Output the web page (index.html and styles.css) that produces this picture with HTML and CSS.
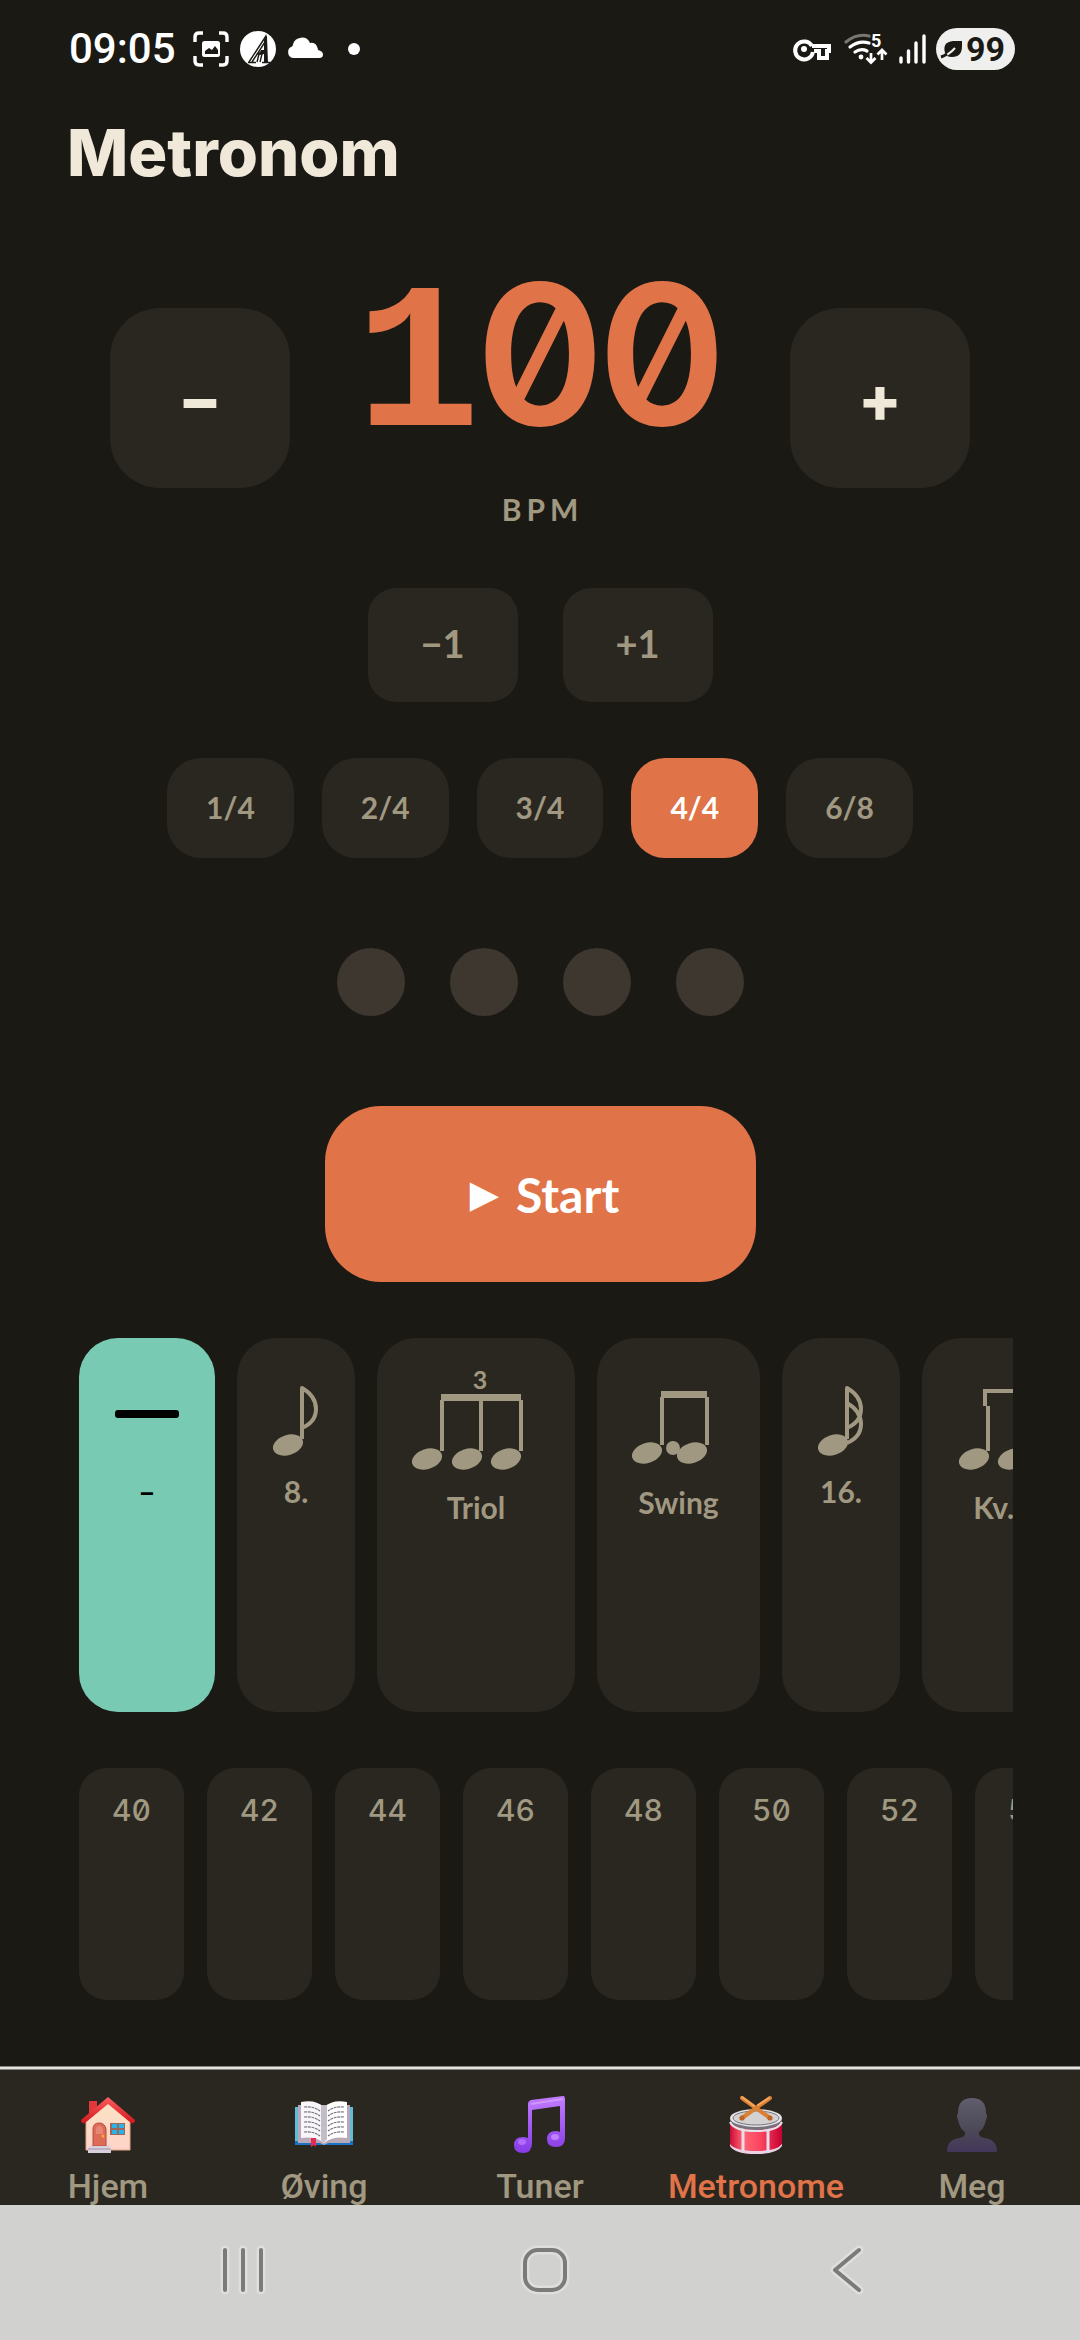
FILE: index.html
```html
<!DOCTYPE html>
<html lang="no">
<head>
<meta charset="utf-8">
<meta name="viewport" content="width=device-width, initial-scale=1">
<title>Metronom</title>
<link rel="stylesheet" href="styles.css">
</head>
<body>
<div class="app">
  <header class="status">
    <div class="status-side">
      <span class="clock">09:05</span>
      <svg width="36" height="36" viewBox="0 0 36 36" aria-hidden="true">
        <path d="M2 11V6q0-4 4-4h4M26 2h4q4 0 4 4v5M34 25v5q0 4-4 4h-4M10 34H6q-4 0-4-4v-5" fill="none" stroke="#fff" stroke-width="3.4"/>
        <rect x="9" y="10" width="18" height="16" rx="2.500" fill="#fff"/>
        <path d="M12 23v-3l4-3 3 2 3-4 3 4v4z" fill="#1a1914"/>
      </svg>
      <svg width="36" height="36" viewBox="0 0 36 36" aria-hidden="true">
        <circle cx="18" cy="18" r="18" fill="#fff"/>
        <path d="M9 31L26 5M12 31L25 11M8 31.500h8M17 31l2-8M20 31l2-8M22 31.500h8" fill="none" stroke="#1a1914" stroke-width="1.400"/>
        <path d="M24 9l2-6 1 3 1 26h-4z" fill="#1a1914"/>
        <path d="M16 23l4-2 1-2h3v4l-4 1z" fill="#1a1914"/>
      </svg>
      <svg width="36" height="36" viewBox="0 0 36 36" aria-hidden="true">
        <path d="M6 27a6 6 0 0 1-1-11.500q1-1 1-2a9 9 0 0 1 17-1.500q5-1 7 3.500 1 2 1 3.500 5 1 5 4.500t-4 3.500z" fill="#fff"/>
      </svg>
      <span class="dot-more"></span>
    </div>
    <div class="status-side status-right">
      <svg width="41" height="24" viewBox="0 0 41 24" aria-hidden="true">
        <path d="M19 9h17v5h-2v7h-8v-7h-5M19 9A9 9 0 1 0 20 15" fill="none" stroke="#fff" stroke-width="4"/>
        <circle cx="11" cy="12" r="3" fill="#fff"/>
      </svg>
      <svg width="44" height="34" viewBox="0 0 44 34" aria-hidden="true">
        <path d="M2 10Q13 1 25 4" fill="none" stroke="#77766f" stroke-width="3.200" stroke-linecap="round"/>
        <path d="M6 15q9-7 19-4M11 20q6-4 12-1" fill="none" stroke="#fff" stroke-width="3.200" stroke-linecap="round"/>
        <circle cx="17" cy="25" r="2.400" fill="#fff"/>
        <path d="M27 21v9M22.500 26l4.500 4.500 4.500-4.500M38 28v-9M33.500 22.500l4.500-4.500 4.500 4.500" fill="none" stroke="#fff" stroke-width="2.700"/>
        <text x="27" y="15" class="wifi-band">5</text>
      </svg>
      <svg width="28" height="32" viewBox="0 0 28 32" aria-hidden="true">
        <path d="M3 25v4M10.500 18v11M18 10v19M26 3v26" stroke="#fff" stroke-width="3.400" stroke-linecap="round"/>
      </svg>
      <span class="battery">
        <svg width="24" height="20" viewBox="0 0 24 20" aria-hidden="true">
          <path d="M5 14Q2 3 13 2h9v5q0 11-10 11-3 0-5-1z" fill="#1a1914"/>
          <path d="M1 18q8-2 14-9" fill="none" stroke="#efefed" stroke-width="2"/>
          <path d="M1 18q3-1 6-3" fill="none" stroke="#1a1914" stroke-width="3"/>
        </svg>99</span>
    </div>
  </header>

  <main class="main">
    <h1 class="title">Metronom</h1>

    <section class="tempo" aria-label="Tempo">
      <button class="step" type="button" aria-label="Saktere">−</button>
      <div class="tempo-value">
        <div class="digits"><span class="digit digit-one">1</span><span class="digit">0</span><span class="digit">0</span></div>
        <div class="unit">BPM</div>
      </div>
      <button class="step" type="button" aria-label="Raskere">+</button>
    </section>

    <div class="fine">
      <button class="fine-btn" type="button">−1</button>
      <button class="fine-btn" type="button">+1</button>
    </div>

    <div class="meters">
      <button class="meter" type="button">1/4</button>
      <button class="meter" type="button">2/4</button>
      <button class="meter" type="button">3/4</button>
      <button class="meter meter-active" type="button">4/4</button>
      <button class="meter" type="button">6/8</button>
    </div>

    <div class="beats" aria-hidden="true">
      <span class="beat"></span><span class="beat"></span><span class="beat"></span><span class="beat"></span>
    </div>

    <button class="start" type="button"><span class="play">▶</span>Start</button>

    <div class="scroller rhythms">
      <button class="rhythm rhythm-active" type="button">
        <svg width="68" height="96" viewBox="0 0 68 96" aria-hidden="true"><rect x="2" y="44" width="64" height="8" rx="3" fill="#000"/></svg>
        <span>–</span>
      </button>
      <button class="rhythm" type="button">
        <svg width="60" height="96" viewBox="0 0 60 96" aria-hidden="true">
          <ellipse class="ink" cx="22" cy="79" rx="15.500" ry="10" transform="rotate(-18 22 79)"/>
          <path class="line" d="M36 73V22Q50 30 50 43T36 62" stroke-linejoin="round"/>
        </svg>
        <span>8.</span>
      </button>
      <button class="rhythm rhythm-wide" type="button">
        <svg width="140" height="112" viewBox="0 0 140 112" aria-hidden="true">
          <text class="tuplet" x="74" y="23">3</text>
          <path class="ink" d="M35 28h80v7H35z"/>
          <path class="line" d="M36 34v51M75 34v51M115 34v51"/>
          <ellipse class="ink" cx="21" cy="93" rx="15.500" ry="10" transform="rotate(-18 21 93)"/>
          <ellipse class="ink" cx="61" cy="93" rx="15.500" ry="10" transform="rotate(-18 61 93)"/>
          <ellipse class="ink" cx="100" cy="93" rx="15.500" ry="10" transform="rotate(-18 100 93)"/>
        </svg>
        <span>Triol</span>
      </button>
      <button class="rhythm rhythm-mid" type="button">
        <svg width="103" height="107" viewBox="0 0 103 107" aria-hidden="true">
          <path class="ink" d="M34 25h46v7H34z"/>
          <path class="line" d="M35 31v48M80 31v48"/>
          <ellipse class="ink" cx="20" cy="87" rx="15.500" ry="10" transform="rotate(-18 20 87)"/>
          <circle class="ink" cx="46" cy="82" r="7"/>
          <ellipse class="ink" cx="65" cy="87" rx="15.500" ry="10" transform="rotate(-18 65 87)"/>
        </svg>
        <span>Swing</span>
      </button>
      <button class="rhythm" type="button">
        <svg width="60" height="96" viewBox="0 0 60 96" aria-hidden="true">
          <ellipse class="ink" cx="22" cy="79" rx="15.500" ry="10" transform="rotate(-18 22 79)"/>
          <path class="line" d="M36 73V22Q50 30 50 43T36 62M36 37Q50 45 50 58T36 77" stroke-linejoin="round"/>
        </svg>
        <span>16.</span>
      </button>
      <button class="rhythm rhythm-wide" type="button">
        <svg width="140" height="112" viewBox="0 0 140 112" aria-hidden="true">
          <path class="line" d="M34 40V25h82v15"/>
          <path class="line" d="M37 40v45M76 40v45M116 40v45"/>
          <ellipse class="ink" cx="23" cy="93" rx="15.500" ry="10" transform="rotate(-18 23 93)"/>
          <ellipse class="ink" cx="62" cy="93" rx="15.500" ry="10" transform="rotate(-18 62 93)"/>
          <ellipse class="ink" cx="102" cy="93" rx="15.500" ry="10" transform="rotate(-18 102 93)"/>
        </svg>
        <span>Kv.triol</span>
      </button>
    </div>

    <div class="scroller presets">
      <button class="preset" type="button">40</button>
      <button class="preset" type="button">42</button>
      <button class="preset" type="button">44</button>
      <button class="preset" type="button">46</button>
      <button class="preset" type="button">48</button>
      <button class="preset" type="button">50</button>
      <button class="preset" type="button">52</button>
      <button class="preset" type="button">54</button>
    </div>
  </main>

  <nav class="tabs">
    <a class="tab" href="#hjem">
      <svg width="60" height="60" viewBox="0 0 60 60" aria-hidden="true">
        <defs>
          <linearGradient id="wall" x1="0" y1="0" x2="0" y2="1"><stop offset="0" stop-color="#fbe3c4"/><stop offset="1" stop-color="#ffd3c8"/></linearGradient>
          <linearGradient id="roof" x1="0" y1="0" x2="0" y2="1"><stop offset="0" stop-color="#fb5f5f"/><stop offset="1" stop-color="#d3161c"/></linearGradient>
        </defs>
        <path d="M11 6h8v12h-8z" fill="#e2383c"/>
        <path d="M8 25L30 6l22 19v30H8z" fill="url(#wall)" stroke="#e5a68d" stroke-width="1"/>
        <path d="M30 2L57 25q0 4-4 3L30 9 7 28q-4 1-4-3z" fill="url(#roof)"/>
        <path d="M15 51V34q0-6 6-6t7 6v17z" fill="#dc6b58" stroke="#b94b3d" stroke-width="1"/>
        <path d="M18 39v-5q0-3 3-3t4 3v5z" fill="#e88673"/>
        <circle cx="25" cy="41" r="1.500" fill="#ffb02e"/>
        <rect x="32" y="28" width="15" height="12" fill="#a2655b"/>
        <path d="M34 29h5v4h-5zM41 29h5v4h-5zM34 35h5v4h-5zM41 35h5v4h-5z" fill="#25b5e8"/>
        <path d="M12 51h19l2 3v4H10v-4z" fill="#d9d0de"/><path d="M10 54h23" stroke="#a294ab" stroke-width="1"/>
      </svg>
      <span class="tab-label">Hjem</span>
    </a>
    <a class="tab" href="#oving">
      <svg width="60" height="60" viewBox="0 0 60 60" aria-hidden="true">
        <path d="M1 12h58v38H1z" fill="#1c72c4"/><path d="M1 12h58v34H1z" fill="#62bcd8"/>
        <path d="M4 10h52v38H34l-4 2-4-2H4z" fill="#b8a9b9"/>
        <path d="M7 7q14-3 23 5v36q-9-7-23-5z" fill="#f9f6fb"/>
        <path d="M53 7q-14-3-23 5v36q9-7 23-5z" fill="#fff"/>
        <path d="M27 10l3 2 3-2v34l-3 4-3-3z" fill="#c2bec8"/>
        <path d="M10 12q9-1 16 4M10 17q9-1 16 4M10 22q9-1 16 4M10 27q9-1 16 4M10 32q9-1 16 4M10 37q9-1 16 4M50 12q-9-1-16 4M50 17q-9-1-16 4M50 22q-9-1-16 4M50 27q-9-1-16 4M50 32q-9-1-16 4M50 37q-9-1-16 4" fill="none" stroke="#77737d" stroke-width="1.200" stroke-dasharray="3 .7"/>
        <path d="M17 43h5v9l-2-2-3 2z" fill="#e52b54"/>
      </svg>
      <span class="tab-label">Øving</span>
    </a>
    <a class="tab" href="#tuner">
      <svg width="60" height="60" viewBox="0 0 60 60" aria-hidden="true">
        <defs><linearGradient id="note" x1="0" y1="0" x2="0" y2="1"><stop offset="0" stop-color="#c27cff"/><stop offset="1" stop-color="#873be6"/></linearGradient></defs>
        <path d="M18 9q0-3 3-4l32-4q2 0 2 3v39q0 9-9 9t-9-8q0-8 9-8 2 0 4 1V11l-28 4v33q0 10-9 10t-9-8q0-8 9-8 2 0 5 1z" fill="url(#note)"/>
        <path d="M21 9l32-5" stroke="#cf96ff" stroke-width="2"/>
        <ellipse cx="12" cy="47" rx="4" ry="3" fill="#b36bff"/><ellipse cx="45" cy="42" rx="4" ry="3" fill="#bf82ff"/>
      </svg>
      <span class="tab-label">Tuner</span>
    </a>
    <a class="tab tab-active" href="#metronome">
      <svg width="60" height="60" viewBox="0 0 60 60" aria-hidden="true">
        <defs><linearGradient id="drum" x1="0" y1="0" x2="1" y2="0"><stop offset="0" stop-color="#c90b37"/><stop offset=".25" stop-color="#ff6674"/><stop offset=".6" stop-color="#fb4360"/><stop offset="1" stop-color="#c50032"/></linearGradient></defs>
        <path d="M4 27v23q5 9 26 9t26-9V27z" fill="url(#drum)"/>
        <path d="M4 49v2q5 8 26 8t26-8v-2q-5 7-26 7T4 49z" fill="#e8d4e6"/>
        <path d="M17 32v24M42 32v24" stroke="#e9dfe9" stroke-width="3"/>
        <ellipse cx="30" cy="25" rx="26" ry="10" fill="#77737e"/>
        <ellipse cx="30" cy="23" rx="26" ry="9" fill="#e6e4e7"/>
        <ellipse cx="30" cy="23" rx="23" ry="7" fill="#d4d1d3" stroke="#76737b" stroke-width="1"/>
        <path d="M4 27q4 9 26 9t26-9" fill="none" stroke="#e6e2e8" stroke-width="2"/>
        <path d="M16 3l28 20M44 3L16 23" stroke="#d98032" stroke-width="4" stroke-linecap="round"/>
        <path d="M16 2l12 9M43 3L32 10" stroke="#f5a65a" stroke-width="2" stroke-linecap="round"/>
        <circle cx="16" cy="23" r="2.600" fill="#be6427"/><circle cx="44" cy="23" r="2.600" fill="#be6427"/>
      </svg>
      <span class="tab-label">Metronome</span>
    </a>
    <a class="tab" href="#meg">
      <svg width="60" height="60" viewBox="0 0 60 60" aria-hidden="true">
        <defs><linearGradient id="bust" x1="0" y1="0" x2="0" y2="1"><stop offset="0" stop-color="#605e6c"/><stop offset=".6" stop-color="#4b4858"/><stop offset="1" stop-color="#443659"/></linearGradient></defs>
        <path d="M30 3q14 0 14 15 2 3 0 7-2 9-7 12v2q0 3 6 4 12 2 12 13 0 1-2 1H7q-2 0-2-1 0-11 12-13 6-1 6-4v-2q-5-3-7-12-2-4 0-7Q16 3 30 3z" fill="url(#bust)"/>
      </svg>
      <span class="tab-label">Meg</span>
    </a>
  </nav>

  <div class="system">
    <button class="system-btn" type="button" aria-label="Nylige apper">
      <svg width="54" height="54" viewBox="0 0 54 54"><path class="halo" d="M9 7v40M27 7v40M45 7v40"/><path class="glyph" d="M9 7v40M27 7v40M45 7v40"/></svg>
    </button>
    <button class="system-btn" type="button" aria-label="Hjem">
      <svg width="54" height="54" viewBox="0 0 54 54"><rect class="halo" x="7" y="7" width="40" height="40" rx="13"/><rect class="glyph" x="7" y="7" width="40" height="40" rx="13"/></svg>
    </button>
    <button class="system-btn" type="button" aria-label="Tilbake">
      <svg width="54" height="54" viewBox="0 0 54 54"><path class="halo" d="M39 7L15 27l24 20"/><path class="glyph" d="M39 7L15 27l24 20"/></svg>
    </button>
  </div>
</div>
</body>
</html>
```
FILE: styles.css
```css
:root {
  --bg: #1a1914;
  --card: #2a2721;
  --muted: #a09880;
  --cream: #f0e9da;
  --accent: #e07347;
  --teal: #78cab2;
}

* { box-sizing: border-box; }

body {
  margin: 0;
  background: var(--bg);
  color: var(--muted);
  font-family: Lato, sans-serif;
  font-weight: 700;
}

button {
  margin: 0;
  padding: 0;
  border: 0;
  background: var(--card);
  color: inherit;
  font: inherit;
  cursor: pointer;
}

svg {
  display: block;
  flex: none;
  overflow: visible;
}

.app {
  display: flex;
  flex-direction: column;
  min-height: 100vh;
}

/* Status bar */
.status {
  display: flex;
  justify-content: space-between;
  height: 97px;
  padding: 0 65px 0 69px;
  color: #fff;
  font-family: Roboto, sans-serif;
}

.status-side {
  display: flex;
  align-items: center;
  gap: 11px;
}

.status-right { gap: 10px; }

.clock {
  margin-right: 6px;
  font-size: 42px;
  font-weight: 500;
}

.dot-more {
  width: 12px;
  height: 12px;
  margin-left: 14px;
  border-radius: 50%;
  background: #fff;
}

.wifi-band {
  fill: #fff;
  font-size: 18px;
  font-weight: 700;
}

.battery {
  display: flex;
  align-items: center;
  gap: 2px;
  height: 42px;
  padding: 0 10px 0 4px;
  border-radius: 21px;
  background: #efefed;
  color: var(--bg);
  font-size: 34px;
}

/* Content */
.main {
  display: flex;
  flex: 1;
  flex-direction: column;
  align-items: center;
  padding: 13px 67px 66px;
}

.title {
  align-self: flex-start;
  margin: 0;
  color: var(--cream);
  font-family: Inter, sans-serif;
  font-size: 65px;
  font-weight: 800;
  line-height: 86px;
}

.tempo {
  display: flex;
  align-items: center;
  gap: 67px;
  margin-top: 65px;
}

.step {
  width: 180px;
  height: 180px;
  border-radius: 50px;
  color: var(--cream);
  font-family: Inter, sans-serif;
  font-size: 64px;
  font-weight: 800;
}

.tempo-value {
  display: flex;
  flex-direction: column;
  gap: 36px;
}

.digits {
  display: flex;
  align-items: baseline;
  color: var(--accent);
  font-family: Inter, sans-serif;
  font-feature-settings: "zero";
  font-size: 195px;
  font-weight: 600;
  line-height: 186px;
}

.digit {
  display: flex;
  justify-content: center;
  width: 122px;
}

.digit-one {
  font-family: "Liberation Mono", monospace;
  font-size: 208px;
  font-weight: 700;
  line-height: 150px;
}

.unit {
  padding-left: 5px;
  font-size: 30px;
  letter-spacing: 5px;
  line-height: 52px;
  text-align: center;
}

.fine {
  display: flex;
  gap: 45px;
  margin-top: 53px;
}

.fine-btn {
  width: 150px;
  height: 114px;
  padding-bottom: 4px;
  border-radius: 28px;
  font-size: 38px;
}

.meters {
  display: flex;
  gap: 28px;
  margin-top: 56px;
}

.meter {
  height: 100px;
  padding: 0 39px 2px;
  border-radius: 34px;
  font-size: 30px;
}

.meter-active {
  background: var(--accent);
  color: #fff;
}

.beats {
  display: flex;
  gap: 45px;
  margin-top: 90px;
}

.beat {
  width: 68px;
  height: 68px;
  border-radius: 50%;
  background: #3d3730;
}

.start {
  display: flex;
  align-items: center;
  justify-content: center;
  gap: 17px;
  width: 431px;
  height: 176px;
  margin-top: 90px;
  padding-left: 9px;
  border-radius: 56px;
  background: var(--accent);
  color: #fff;
  font-size: 48px;
}

.play {
  font-family: "DejaVu Sans", sans-serif;
  font-size: 38px;
}

.scroller {
  display: flex;
  align-self: stretch;
  gap: 22px;
  margin-top: 56px;
  padding: 0 12px;
  overflow: hidden;
}

.rhythm {
  display: flex;
  flex: none;
  flex-direction: column;
  align-items: center;
  gap: 11px;
  width: 118px;
  min-height: 374px;
  padding-top: 28px;
  border-radius: 39px;
  font-size: 30px;
  line-height: 36px;
}

.rhythm-active {
  width: 136px;
  background: var(--teal);
  color: #000;
}

.rhythm-wide { width: 198px; }
.rhythm-mid { width: 163px; }

.ink { fill: var(--muted); }

.line {
  fill: none;
  stroke: var(--muted);
  stroke-width: 4px;
}

.tuplet {
  fill: var(--muted);
  font-size: 25px;
  text-anchor: middle;
}

.presets { gap: 23px; }

.preset {
  display: flex;
  flex: none;
  justify-content: center;
  width: 105px;
  min-height: 232px;
  padding-top: 24px;
  border-radius: 28px;
  font-family: Inter, sans-serif;
  font-feature-settings: "zero", "tnum";
  font-size: 30px;
  font-weight: 500;
  line-height: 36px;
}

/* Tab bar */
.tabs {
  display: flex;
  height: 139px;
  padding-top: 28px;
  overflow: hidden;
  border-top: 1px solid #86857f;
  background: var(--card);
  box-shadow: inset 0 2px #e2e3de, inset 0 3px #86857f;
  font-family: Roboto, sans-serif;
  font-size: 34px;
  font-weight: 500;
}

.tab {
  display: flex;
  flex: 1 1 0;
  flex-direction: column;
  align-items: center;
  gap: 11px;
  color: var(--muted);
  text-decoration: none;
}

.tab-active { color: var(--accent); }

.tab-label { line-height: 40px; }

/* System navigation */
.system {
  display: flex;
  justify-content: center;
  gap: 248px;
  height: 135px;
  padding: 0 0 5px 10px;
  background: #d1d1cf;
}

.system-btn {
  display: flex;
  align-items: center;
  background: none;
}

.halo, .glyph {
  fill: none;
  stroke-linecap: round;
  stroke-linejoin: round;
}

.halo { stroke: #dededc; stroke-width: 9px; }
.glyph { stroke: #7b7b79; stroke-width: 4px; }
```
